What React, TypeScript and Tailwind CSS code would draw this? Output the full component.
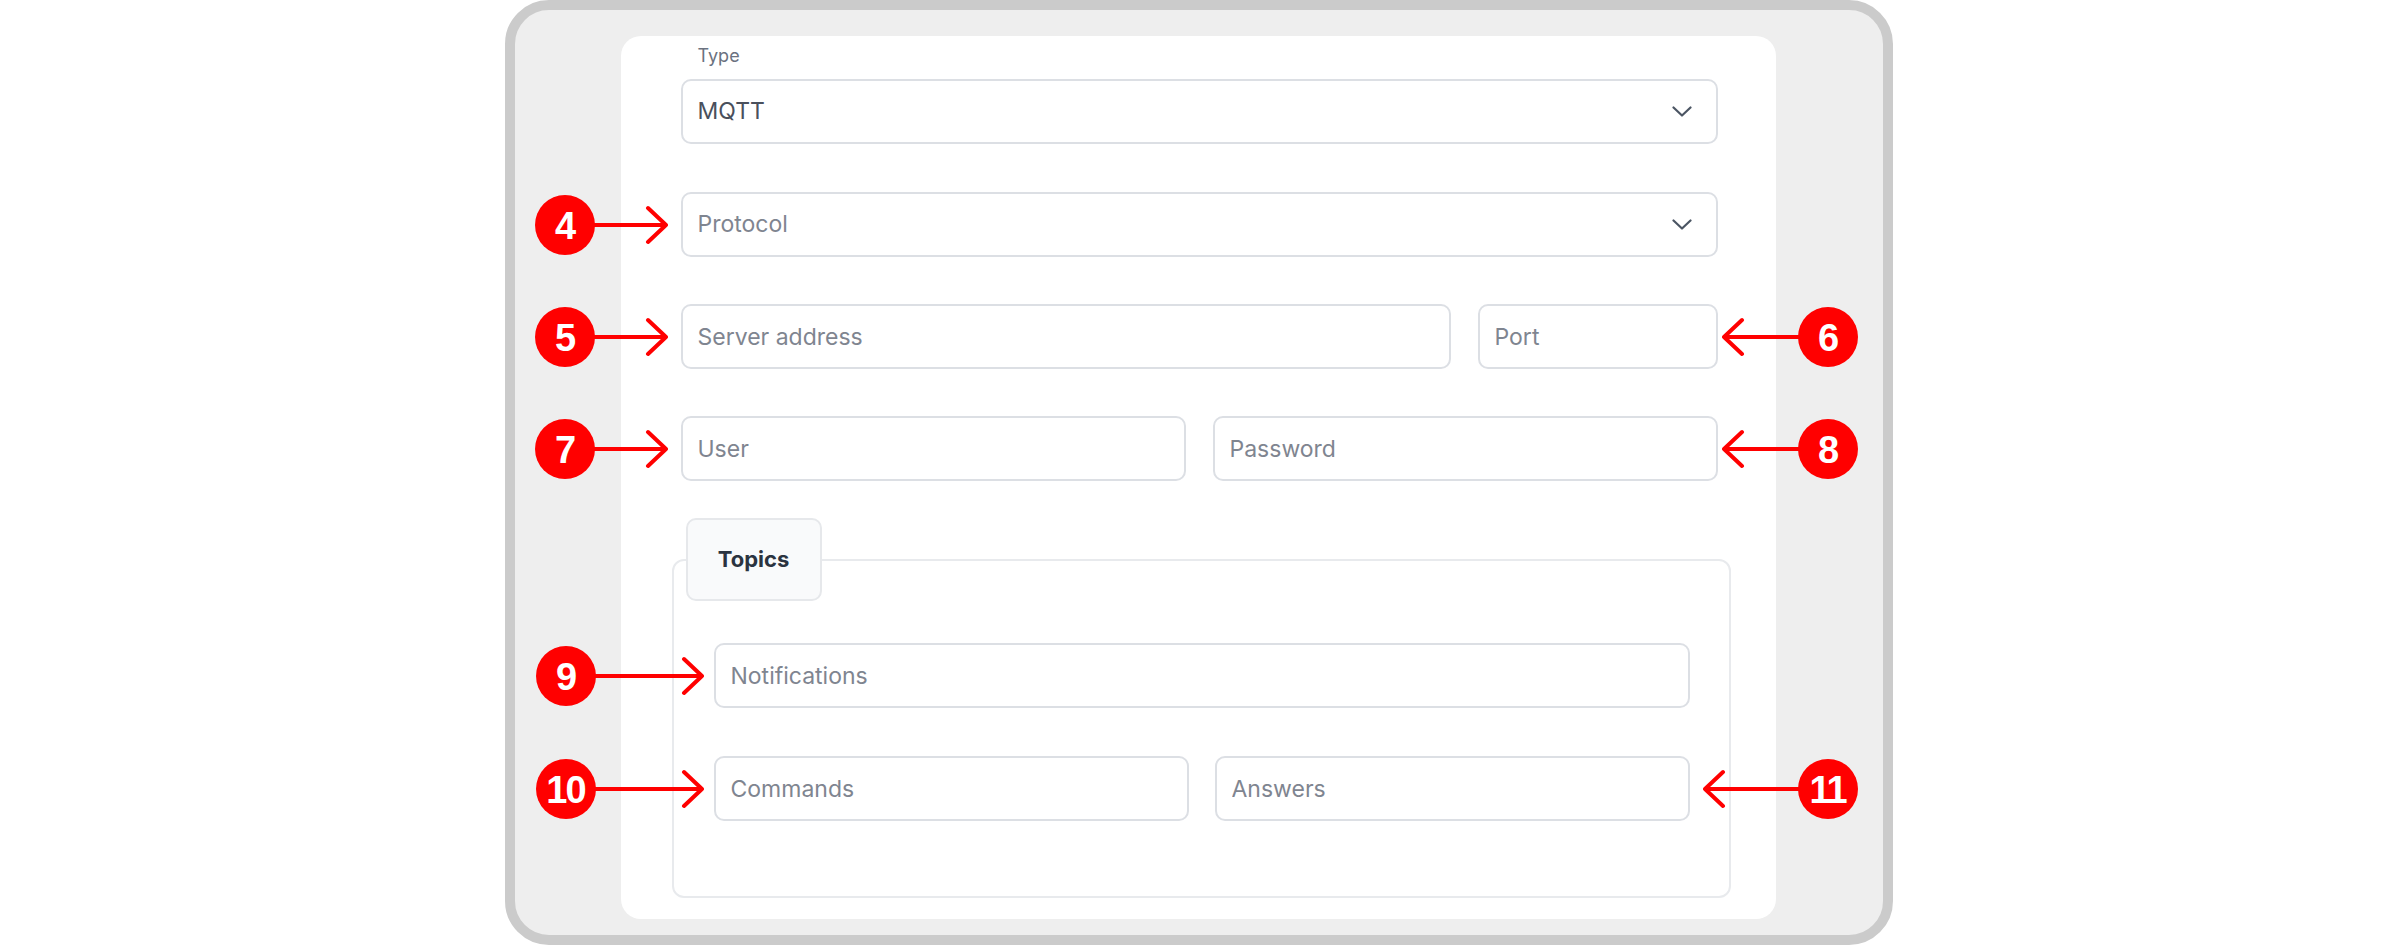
import type { ReactNode } from "react";

type Side = "left" | "right";

interface CalloutProps {
  n: number;
  side: Side;
  arrow: number;
  className: string;
}

// red numbered marker with an arrow pointing at the field it belongs to
const Callout = ({ n, side, arrow, className }: CalloutProps) => {
  const tip = arrow - 2;
  const head = side === "left" ? `${tip - 18},3 ${tip},20 ${tip - 18},37` : `20,3 2,20 20,37`;

  const badge = (
    <div className="flex h-[60px] w-[60px] shrink-0 items-center justify-center rounded-full bg-[#ff0000] pt-[3px] font-['Liberation_Sans',Arial,sans-serif] text-[38px] font-bold leading-none tracking-[-2px] text-white">
      {n}
    </div>
  );

  const line = (
    <svg width={arrow} height={40} viewBox={`0 0 ${arrow} 40`} className="-mx-[1px] shrink-0">
      <line
        x1={side === "left" ? 0 : 2}
        y1={20}
        x2={side === "left" ? tip : arrow}
        y2={20}
        stroke="#ff0000"
        strokeWidth={4}
      />
      <polyline
        points={head}
        fill="none"
        stroke="#ff0000"
        strokeWidth={4}
        strokeLinecap="round"
        strokeLinejoin="round"
      />
    </svg>
  );

  return (
    <div className={`absolute top-1/2 flex -translate-y-1/2 items-center ${className}`}>
      {side === "left" ? (
        <>
          {badge}
          {line}
        </>
      ) : (
        <>
          {line}
          {badge}
        </>
      )}
    </div>
  );
};

const inputCls =
  "h-[65px] w-full rounded-[10px] border-2 border-[#dcdfe4] bg-white px-[15px] text-[23px] text-[#4a505c] outline-none placeholder:text-[#7f8590]";

const Chevron = () => (
  <svg width="20" height="11" viewBox="0 0 20 11" fill="none">
    <path d="M1.5 1.5 L10 9.5 L18.5 1.5" stroke="#4b5563" strokeWidth="2.2" strokeLinecap="round" strokeLinejoin="round" />
  </svg>
);

const Select = ({ value, placeholder }: { value?: string; placeholder: string }) => (
  <div className="flex h-[65px] w-full cursor-pointer items-center justify-between rounded-[10px] border-2 border-[#dcdfe4] bg-white pr-[24px] pl-[15px] text-[23px]">
    <span className={value ? "text-[#4a505c]" : "text-[#7f8590]"}>{value ?? placeholder}</span>
    <Chevron />
  </div>
);

const Field = ({ children, callout, className = "" }: { children: ReactNode; callout?: ReactNode; className?: string }) => (
  <div className={`relative ${className}`}>
    {children}
    {callout}
  </div>
);

const App = () => {
  return (
    <div className="flex h-[945px] justify-center bg-white font-['Inter',sans-serif]">
      <div className="h-[945px] w-[1388px] rounded-[44px] border-[10px] border-[#cbcbcb] bg-[#eeeeee]">
        <div className="mt-[26px] mr-[107px] ml-[106px] h-[883px] rounded-[20px] bg-white pt-[8px]">
          <div className="pr-[58px] pl-[60px]">
            <div className="pl-[17px] text-[18px] leading-[24px] text-[#6b7280]">Type</div>

            <Field className="mt-[11px]">
              <Select value="MQTT" placeholder="Type" />
            </Field>

            <Field
              className="mt-[48px]"
              callout={<Callout n={4} side="left" arrow={74} className="right-[calc(100%+14px)]" />}
            >
              <Select placeholder="Protocol" />
            </Field>

            <div className="mt-[47px] flex gap-[27px]">
              <Field
                className="flex-1"
                callout={<Callout n={5} side="left" arrow={74} className="right-[calc(100%+14px)]" />}
              >
                <input className={inputCls} placeholder="Server address" />
              </Field>
              <Field
                className="w-[240px]"
                callout={<Callout n={6} side="right" arrow={77} className="left-[calc(100%+5px)]" />}
              >
                <input className={inputCls} placeholder="Port" />
              </Field>
            </div>

            <div className="mt-[47px] grid grid-cols-2 gap-[27px]">
              <Field callout={<Callout n={7} side="left" arrow={74} className="right-[calc(100%+14px)]" />}>
                <input className={inputCls} placeholder="User" />
              </Field>
              <Field callout={<Callout n={8} side="right" arrow={77} className="left-[calc(100%+5px)]" />}>
                <input type="password" className={inputCls} placeholder="Password" />
              </Field>
            </div>
          </div>

          {/* topics group */}
          <div className="mt-[37px] mr-[45px] ml-[51px]">
            <div className="relative z-10 ml-[14px] flex h-[83px] w-[136px] items-center justify-center rounded-[10px] border-2 border-[#e6e8eb] bg-[#f9fafb] text-[22px] font-bold text-[#2b3340]">
              Topics
            </div>
            <div className="-mt-[42px] rounded-[12px] border-2 border-[#e8eaed] pt-[82px] pr-[39px] pb-[75px] pl-[40px]">
              <Field callout={<Callout n={9} side="left" arrow={109} className="right-[calc(100%+11px)]" />}>
                <input className={inputCls} placeholder="Notifications" />
              </Field>
              <div className="mt-[48px] grid grid-cols-2 gap-[26px]">
                <Field callout={<Callout n={10} side="left" arrow={109} className="right-[calc(100%+11px)]" />}>
                  <input className={inputCls} placeholder="Commands" />
                </Field>
                <Field callout={<Callout n={11} side="right" arrow={96} className="left-[calc(100%+14px)]" />}>
                  <input className={inputCls} placeholder="Answers" />
                </Field>
              </div>
            </div>
          </div>
        </div>
      </div>
    </div>
  );
};

export default App;
